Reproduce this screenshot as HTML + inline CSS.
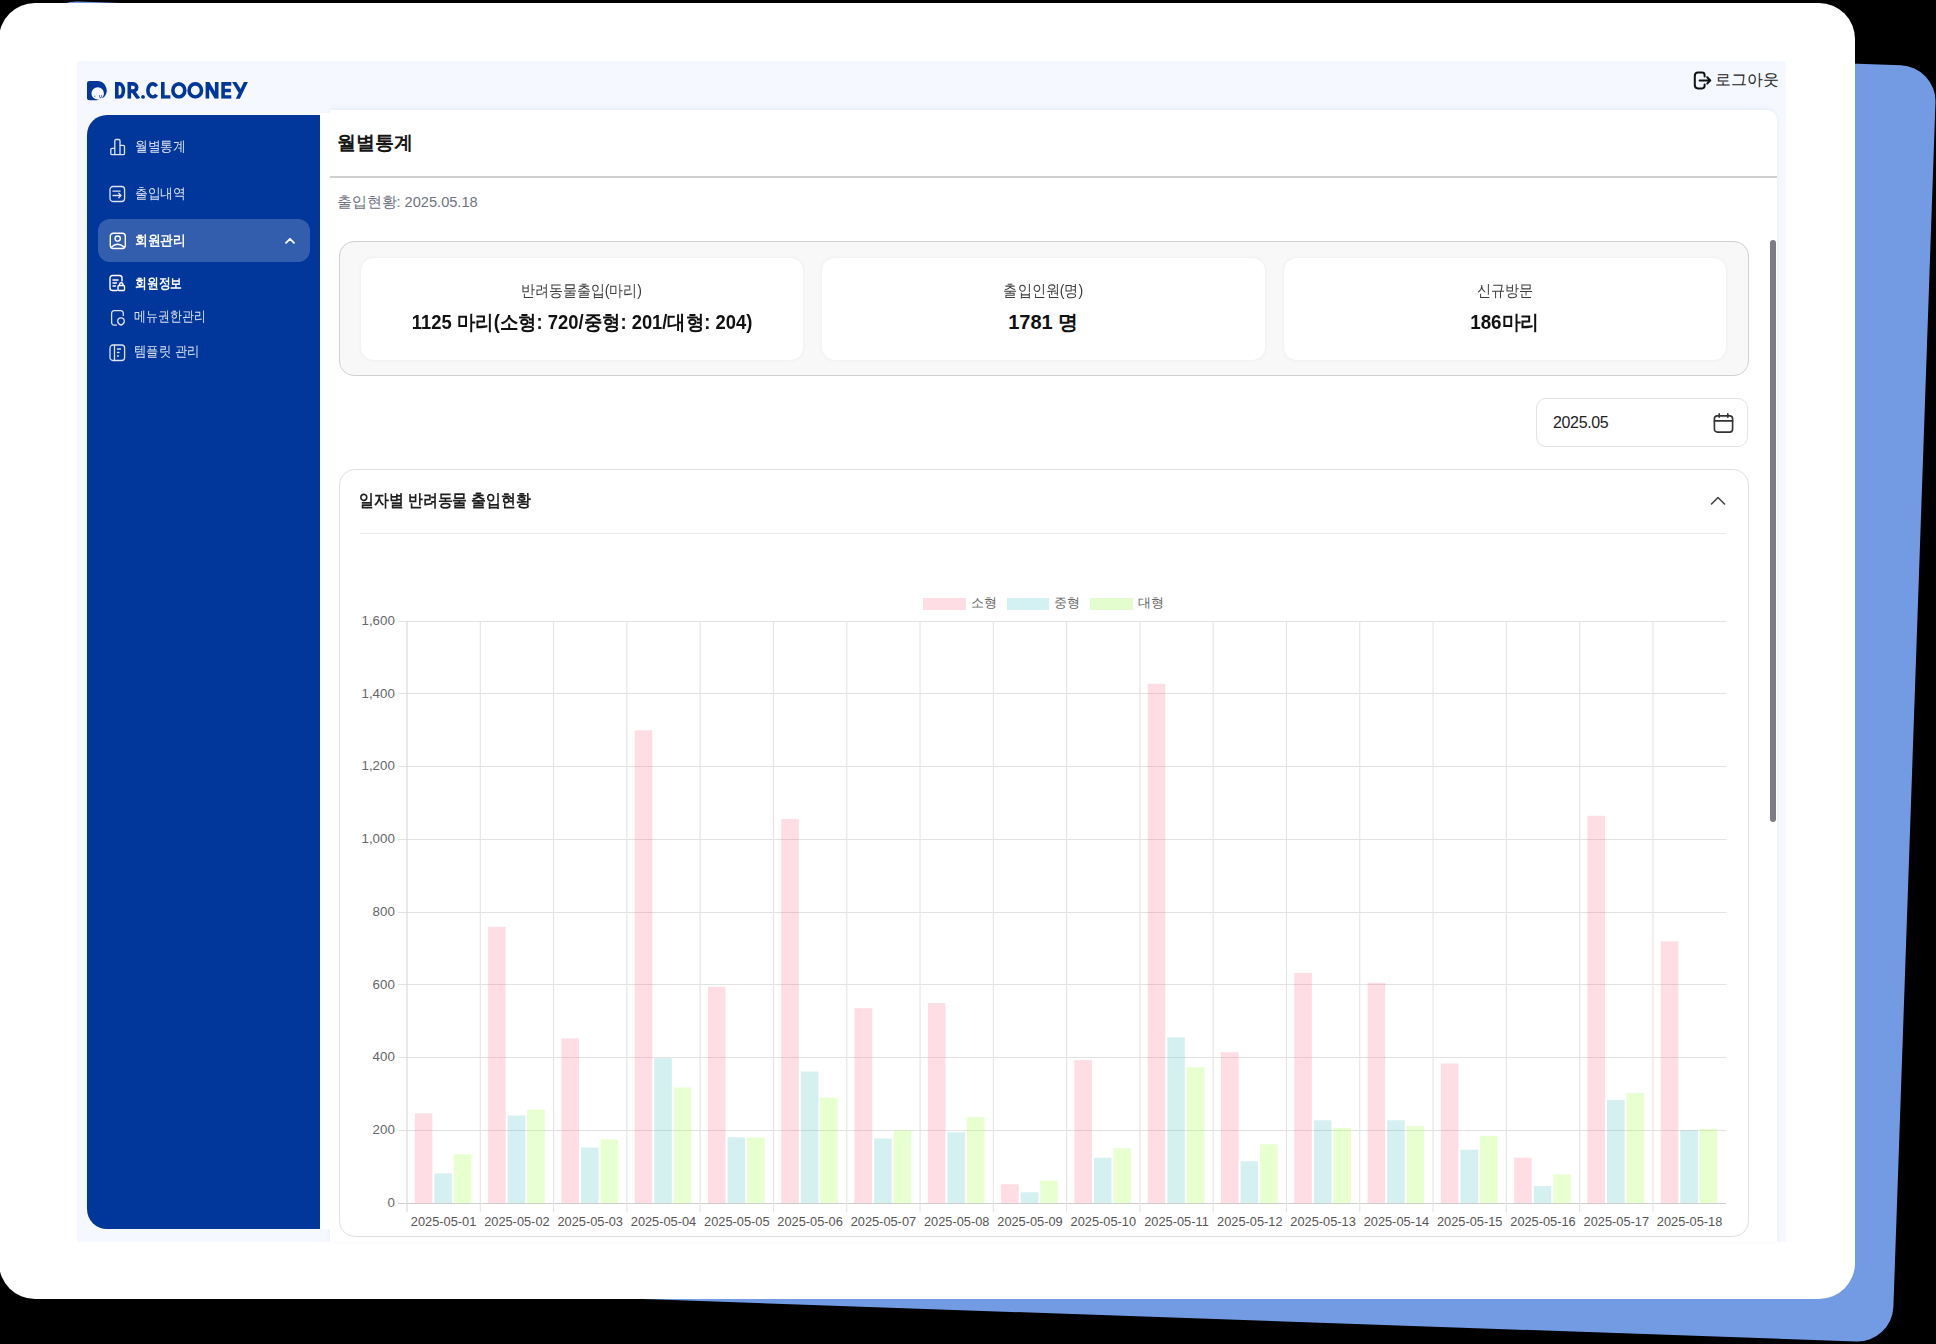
<!DOCTYPE html>
<html><head><meta charset="utf-8">
<style>
*{box-sizing:border-box;margin:0;padding:0}
html,body{width:1936px;height:1344px;overflow:hidden;background:#000;font-family:"Liberation Sans",sans-serif}
.abs{position:absolute}
.t{position:absolute;white-space:nowrap;transform-origin:0 0}
.blue{position:absolute;left:19.16px;top:32.6px;width:1895.8px;height:1277.1px;background:#729be4;border-radius:36px;transform:rotate(2deg)}
.card{position:absolute;left:-1.4px;top:3px;width:1856.4px;height:1296px;background:#fff;border-radius:36px}
.app{position:absolute;left:77px;top:61px;width:1709px;height:1181px;background:#f5f8fe}
.logo{left:112.5px;top:78px;font-weight:bold;font-size:23.5px;line-height:26px;color:#01379a;letter-spacing:-2.3px}
.logout{left:1714.5px;top:69.5px;font-size:16px;line-height:20px;color:#222}
.side{position:absolute;left:87px;top:115px;width:233.5px;height:1114px;background:#01379a;border-radius:20px 0 0 20px}
.mi{left:135.5px;font-size:14px;line-height:18px;color:#dce3f1}
.mi.act{color:#fff;font-weight:bold}
.mi.b{color:#fff;font-weight:bold}
.hl{position:absolute;left:98px;top:219px;width:212px;height:43px;border-radius:12px;background:#335eae}
.main{position:absolute;left:329.6px;top:109.5px;width:1447px;height:1132.5px;background:#fff;border-radius:0 10px 0 0;box-shadow:0 -1px 4px rgba(195,205,228,0.3)}
.gap{position:absolute;left:320px;top:113px;width:10px;height:1116px;background:#fff}
.title{left:336.5px;top:128.5px;font-size:19.4px;line-height:26px;font-weight:bold;color:#161616}
.hdiv{position:absolute;left:329.6px;top:176px;width:1447.4px;height:1.5px;background:#cfcfcf}
.sub{left:336.5px;top:193px;font-size:14.6px;line-height:18px;color:#6f7280}
.stats{position:absolute;left:338.5px;top:241px;width:1410px;height:135px;background:#f8f8f8;border:1.5px solid #d0d0d0;border-radius:15px}
.sc{position:absolute;top:257.5px;height:102px;background:#fff;border-radius:13px;box-shadow:0 0 4px rgba(0,0,0,0.06)}
.cw{position:absolute;left:0;right:0;text-align:center;white-space:nowrap}
.cw span{display:inline-block;transform-origin:50% 0}
.sl{top:23px;font-size:16px;line-height:20px;color:#3c3c3c}
.sv{top:52.5px;font-size:20px;line-height:24px;font-weight:bold;color:#111}
.date{position:absolute;left:1536px;top:398px;width:212px;height:49px;border:1px solid #e3e3e3;border-radius:10px;background:#fff}
.dtxt{left:1553px;top:413px;font-size:16px;line-height:20px;color:#222;letter-spacing:-0.35px}
.ccard{position:absolute;left:338.5px;top:469px;width:1410px;height:767.5px;border:1.3px solid #e0e0e0;border-radius:16px;background:#fff}
.ctitle{left:359px;top:489px;font-size:16.5px;line-height:22px;font-weight:bold;color:#1e1e1e}
.cdiv{position:absolute;left:360px;top:533px;width:1366px;height:1px;background:#eaeaea}
.scroll{position:absolute;left:1770px;top:239.7px;width:6px;height:582px;border-radius:3px;background:#7e7b84}
.yl{font-size:13.3px;fill:#666;font-family:"Liberation Sans",sans-serif}
.xl{font-size:12.8px;fill:#555;font-family:"Liberation Sans",sans-serif}
.lg{top:595px;font-size:12.5px;line-height:16px;color:#666}
</style></head>
<body>
<div class="blue"></div>
<div class="card"></div>
<div class="app"></div>

<!-- logo -->
<svg class="abs" style="left:87px;top:80.7px" width="20" height="20" viewBox="0 0 20 20">
  <defs><mask id="lm"><rect width="20" height="20" fill="#fff"/><circle cx="10.7" cy="12.4" r="6.2" fill="#000"/></mask></defs>
  <path d="M2.5 0 H10 A9.3 9.6 0 0 1 17 16.3 L13 17.5 L10 19.3 H2.5 A2.5 2.5 0 0 1 0 16.8 V2.5 A2.5 2.5 0 0 1 2.5 0 Z" fill="#01379a" mask="url(#lm)"/>
  <path d="M12.6 14.2 V15.6 A1 1 0 0 0 14.6 15.6 V14.2 M7.3 15.2 H8.3" stroke="#01379a" stroke-width="0.8" fill="none"/>
</svg>
<svg class="abs" style="left:110px;top:76px" width="142" height="28" viewBox="0 0 142 28" fill="none" stroke="#01379a" stroke-width="3.6"><defs><clipPath id="lc"><rect x="0" y="6.1" width="142" height="16.7"/></clipPath></defs><g clip-path="url(#lc)">
  <path d="M6.8 7.9 H9.6 A3.8 6.55 0 0 1 9.6 21 H6.8 Z"/>
  <path d="M19.3 22.8 V7.9 H23.2 A3.5 3.6 0 0 1 23.2 15.1 H19.3 M23 15.1 L28.6 22.8"/>
  <circle cx="33" cy="21" r="1.9" fill="#01379a" stroke="none"/>
  <path d="M46.6 10.2 A4.95 6.55 0 1 0 46.6 18.7"/>
  <path d="M52.8 6.1 V21 H60.4"/>
  <ellipse cx="68.85" cy="14.45" rx="5.95" ry="6.55"/>
  <ellipse cx="85.3" cy="14.45" rx="6.2" ry="6.55"/>
  <path d="M95.6 6.1 H99.4 L104.9 15.6 V6.1 H108.5 V22.8 H104.7 L99.2 13.3 V22.8 H95.6 Z" fill="#01379a" stroke="none"/>
  <path d="M121.3 7.9 H113.1 V21 H121.3 M113.1 14.45 H120.8"/>
  <path d="M123.6 5 L130 15.5 M136.4 5 L127.2 24"/>
</g></svg>

<!-- logout -->
<svg class="abs" style="left:1693px;top:71px" width="20" height="19" viewBox="0 0 20 19">
  <path d="M11.6 5.4 V4 A2.6 2.6 0 0 0 9 1.6 H5 A3.3 3.3 0 0 0 1.8 4.9 V14.1 A3.3 3.3 0 0 0 5 17.4 H9 A2.6 2.6 0 0 0 11.6 15 V13.4 M6.6 9.4 H17.3 M14.2 6.2 L17.3 9.4 L14.2 12.6" fill="none" stroke="#111" stroke-width="2" stroke-linecap="round" stroke-linejoin="round"/>
</svg>
<div class="t logout" id="logout">로그아웃</div>

<!-- sidebar -->
<div class="side"></div>
<div class="hl"></div>
<svg class="abs" style="left:108px;top:138px" width="18" height="18" viewBox="0 0 18 18" fill="none" stroke="#dce3f1" stroke-width="1.3">
  <path d="M2.8 15.5 V11.5 A1.2 1.2 0 0 1 4 10.3 H6.8 V2.7 A1.2 1.2 0 0 1 8 1.5 H10.8 A1.2 1.2 0 0 1 12 2.7 V7.3 H15.3 A1.2 1.2 0 0 1 16.5 8.5 V15.5 A1.2 1.2 0 0 1 15.3 16.7 H4 A1.2 1.2 0 0 1 2.8 15.5 Z M6.8 10.3 V16.7 M12 7.3 V16.7"/>
</svg>
<div class="t mi" style="left:134.5px;top:136.5px;transform:scaleX(0.91)">월별통계</div>
<svg class="abs" style="left:108px;top:185px" width="18" height="18" viewBox="0 0 18 18" fill="none" stroke="#dce3f1" stroke-width="1.3" stroke-linecap="round" stroke-linejoin="round">
  <rect x="2" y="1.5" width="14.6" height="15" rx="3"/><path d="M5 6.2 H12 M5 10.5 H13 M10.8 8.3 L13 10.5 L10.8 12.7"/>
</svg>
<div class="t mi" style="left:134.5px;top:183.5px;transform:scaleX(0.91)">출입내역</div>
<svg class="abs" style="left:108px;top:232px" width="18" height="18" viewBox="0 0 18 18" fill="none" stroke="#fff" stroke-width="1.4">
  <rect x="2.3" y="1.2" width="15" height="15.3" rx="3"/><circle cx="9.7" cy="6.6" r="2.6"/><path d="M3.2 15.2 Q9.7 9.3 16.3 15.2"/>
</svg>
<div class="t mi act" style="left:134.5px;top:231px;transform:scaleX(0.91)">회원관리</div>
<svg class="abs" style="left:284px;top:236px" width="12" height="9" viewBox="0 0 12 9" fill="none" stroke="#fff" stroke-width="1.8" stroke-linecap="round" stroke-linejoin="round"><path d="M2 6.8 L6 2.8 L10 6.8"/></svg>
<svg class="abs" style="left:108px;top:274px" width="18" height="18" viewBox="0 0 18 18" fill="none" stroke="#fff" stroke-width="1.4" stroke-linecap="round">
  <path d="M9 16.5 H4.5 A2.5 2.5 0 0 1 2 14 V4 A2.5 2.5 0 0 1 4.5 1.5 H11.5 A2.5 2.5 0 0 1 14 4 V7"/><path d="M5 6 H10 M5 9 H8.5 M5 12 H7.5"/><rect x="10" y="11.5" width="6.5" height="5" rx="1"/><path d="M11.5 11.5 V10.2 A1.8 1.8 0 0 1 15 10.2 V11.5"/>
</svg>
<div class="t mi b" style="left:134.5px;top:273.5px;transform:scaleX(0.84)">회원정보</div>
<svg class="abs" style="left:108px;top:310px" width="18" height="18" viewBox="0 0 18 18" fill="none" stroke="#dce3f1" stroke-width="1.3" stroke-linecap="round">
  <path d="M8.4 15.1 H6.1 A2.5 2.5 0 0 1 3.6 12.6 V3.2 A2.5 2.5 0 0 1 6.1 0.7 H12.8 A2.5 2.5 0 0 1 15.3 3.2 V5.6"/><path d="M13 15.1 C10.6 14.1 9.7 12.7 9.7 11.2 A3.3 3.3 0 0 1 16.3 11.2 C16.3 12.7 15.4 14.1 13 15.1 Z"/>
</svg>
<div class="t mi" style="left:134.2px;top:307px;transform:scaleX(0.85)">메뉴권한관리</div>
<svg class="abs" style="left:108px;top:344px" width="18" height="18" viewBox="0 0 18 18" fill="none" stroke="#dce3f1" stroke-width="1.3" stroke-linecap="round">
  <rect x="2" y="1" width="14.6" height="15.5" rx="3"/><path d="M6.5 1 V16.5 M9.5 5 H12.5 M9.5 8.5 H11 M9.5 12 H10.5"/>
</svg>
<div class="t mi" style="left:134.2px;top:341.5px;transform:scaleX(0.883)">템플릿 관리</div>

<!-- main -->
<div class="main"></div><div class="gap"></div>
<div class="t title">월별통계</div>
<div class="hdiv"></div>
<div class="t sub">출입현황: 2025.05.18</div>

<div class="stats"></div>
<div class="sc" style="left:361px;width:441.5px"><div class="cw sl"><span style="transform:scaleX(0.875)">반려동물출입(마리)</span></div><div class="cw sv"><span style="transform:scaleX(0.92)">1125 마리(소형: 720/중형: 201/대형: 204)</span></div></div>
<div class="sc" style="left:821.5px;width:443.5px"><div class="cw sl"><span style="transform:scaleX(0.88)">출입인원(명)</span></div><div class="cw sv"><span>1781 명</span></div></div>
<div class="sc" style="left:1283.5px;width:442.5px"><div class="cw sl"><span style="transform:scaleX(0.88)">신규방문</span></div><div class="cw sv"><span style="transform:scaleX(0.94)">186마리</span></div></div>

<div class="date"></div>
<div class="t dtxt">2025.05</div>
<svg class="abs" style="left:1711.5px;top:411.5px" width="23" height="22" viewBox="0 0 24 23" fill="none" stroke="#333" stroke-width="1.7" stroke-linecap="round">
  <rect x="2.5" y="4" width="19" height="17" rx="3"/><path d="M2.5 9.3 H21.5 M7.5 2 V5.5 M16.5 2 V5.5"/>
</svg>

<div class="ccard"></div>
<div class="t ctitle" style="transform:scaleX(0.877)">일자별 반려동물 출입현황</div>
<svg class="abs" style="left:1709px;top:493px" width="18" height="16" viewBox="0 0 18 16" fill="none" stroke="#444" stroke-width="1.6" stroke-linecap="round" stroke-linejoin="round"><path d="M2.5 11 L9 4.5 L15.5 11"/></svg>
<div class="cdiv"></div>

<!-- legend -->
<div class="abs" style="left:923px;top:597.5px;width:42.5px;height:12px;background:#ffdde4"></div>
<div class="t lg" style="left:970.5px">소형</div>
<div class="abs" style="left:1006.5px;top:597.5px;width:42.5px;height:12px;background:#d3f1f2"></div>
<div class="t lg" style="left:1053.5px">중형</div>
<div class="abs" style="left:1090px;top:597.5px;width:42.5px;height:12px;background:#e3fdcf"></div>
<div class="t lg" style="left:1137.5px">대형</div>

<svg class="abs" style="left:0;top:0" width="1936" height="1344">
<line x1="398" y1="621.5" x2="1726.2" y2="621.5" stroke="#e2e2e2" stroke-width="1"/>
<text x="394.8" y="624.8" text-anchor="end" class="yl">1,600</text>
<line x1="398" y1="693.5" x2="1726.2" y2="693.5" stroke="#e2e2e2" stroke-width="1"/>
<text x="394.8" y="697.6" text-anchor="end" class="yl">1,400</text>
<line x1="398" y1="766.5" x2="1726.2" y2="766.5" stroke="#e2e2e2" stroke-width="1"/>
<text x="394.8" y="770.3" text-anchor="end" class="yl">1,200</text>
<line x1="398" y1="839.5" x2="1726.2" y2="839.5" stroke="#e2e2e2" stroke-width="1"/>
<text x="394.8" y="843.1" text-anchor="end" class="yl">1,000</text>
<line x1="398" y1="912.5" x2="1726.2" y2="912.5" stroke="#e2e2e2" stroke-width="1"/>
<text x="394.8" y="915.8" text-anchor="end" class="yl">800</text>
<line x1="398" y1="984.5" x2="1726.2" y2="984.5" stroke="#e2e2e2" stroke-width="1"/>
<text x="394.8" y="988.6" text-anchor="end" class="yl">600</text>
<line x1="398" y1="1057.5" x2="1726.2" y2="1057.5" stroke="#e2e2e2" stroke-width="1"/>
<text x="394.8" y="1061.3" text-anchor="end" class="yl">400</text>
<line x1="398" y1="1130.5" x2="1726.2" y2="1130.5" stroke="#e2e2e2" stroke-width="1"/>
<text x="394.8" y="1134.0" text-anchor="end" class="yl">200</text>
<line x1="398" y1="1203.5" x2="1726.2" y2="1203.5" stroke="#cfcfcf" stroke-width="1"/>
<text x="394.8" y="1206.8" text-anchor="end" class="yl">0</text>
<line x1="407.00" y1="621.2" x2="407.00" y2="1212.2" stroke="#d6d6d6" stroke-width="1.1"/>
<line x1="480.29" y1="621.2" x2="480.29" y2="1212.2" stroke="#e4e4e4" stroke-width="1.1"/>
<line x1="553.58" y1="621.2" x2="553.58" y2="1212.2" stroke="#e4e4e4" stroke-width="1.1"/>
<line x1="626.87" y1="621.2" x2="626.87" y2="1212.2" stroke="#e4e4e4" stroke-width="1.1"/>
<line x1="700.16" y1="621.2" x2="700.16" y2="1212.2" stroke="#e4e4e4" stroke-width="1.1"/>
<line x1="773.45" y1="621.2" x2="773.45" y2="1212.2" stroke="#e4e4e4" stroke-width="1.1"/>
<line x1="846.74" y1="621.2" x2="846.74" y2="1212.2" stroke="#e4e4e4" stroke-width="1.1"/>
<line x1="920.03" y1="621.2" x2="920.03" y2="1212.2" stroke="#e4e4e4" stroke-width="1.1"/>
<line x1="993.32" y1="621.2" x2="993.32" y2="1212.2" stroke="#e4e4e4" stroke-width="1.1"/>
<line x1="1066.61" y1="621.2" x2="1066.61" y2="1212.2" stroke="#e4e4e4" stroke-width="1.1"/>
<line x1="1139.90" y1="621.2" x2="1139.90" y2="1212.2" stroke="#e4e4e4" stroke-width="1.1"/>
<line x1="1213.19" y1="621.2" x2="1213.19" y2="1212.2" stroke="#e4e4e4" stroke-width="1.1"/>
<line x1="1286.48" y1="621.2" x2="1286.48" y2="1212.2" stroke="#e4e4e4" stroke-width="1.1"/>
<line x1="1359.77" y1="621.2" x2="1359.77" y2="1212.2" stroke="#e4e4e4" stroke-width="1.1"/>
<line x1="1433.06" y1="621.2" x2="1433.06" y2="1212.2" stroke="#e4e4e4" stroke-width="1.1"/>
<line x1="1506.35" y1="621.2" x2="1506.35" y2="1212.2" stroke="#e4e4e4" stroke-width="1.1"/>
<line x1="1579.64" y1="621.2" x2="1579.64" y2="1212.2" stroke="#e4e4e4" stroke-width="1.1"/>
<line x1="1652.93" y1="621.2" x2="1652.93" y2="1212.2" stroke="#e4e4e4" stroke-width="1.1"/>
<rect x="414.81" y="1113.4" width="17.59" height="89.8" fill="rgba(255,99,132,0.22)"/>
<rect x="434.35" y="1173.4" width="17.59" height="29.8" fill="rgba(75,192,192,0.23)"/>
<rect x="453.89" y="1154.1" width="17.59" height="49.1" fill="rgba(160,255,60,0.24)"/>
<text x="443.6" y="1226" text-anchor="middle" class="xl">2025-05-01</text>
<rect x="488.10" y="926.8" width="17.59" height="276.4" fill="rgba(255,99,132,0.22)"/>
<rect x="507.64" y="1115.5" width="17.59" height="87.7" fill="rgba(75,192,192,0.23)"/>
<rect x="527.18" y="1109.7" width="17.59" height="93.5" fill="rgba(160,255,60,0.24)"/>
<text x="516.9" y="1226" text-anchor="middle" class="xl">2025-05-02</text>
<rect x="561.39" y="1038.4" width="17.59" height="164.8" fill="rgba(255,99,132,0.22)"/>
<rect x="580.93" y="1147.5" width="17.59" height="55.7" fill="rgba(75,192,192,0.23)"/>
<rect x="600.47" y="1139.5" width="17.59" height="63.7" fill="rgba(160,255,60,0.24)"/>
<text x="590.2" y="1226" text-anchor="middle" class="xl">2025-05-03</text>
<rect x="634.68" y="730.3" width="17.59" height="472.9" fill="rgba(255,99,132,0.22)"/>
<rect x="654.22" y="1058.1" width="17.59" height="145.1" fill="rgba(75,192,192,0.23)"/>
<rect x="673.76" y="1087.5" width="17.59" height="115.7" fill="rgba(160,255,60,0.24)"/>
<text x="663.5" y="1226" text-anchor="middle" class="xl">2025-05-04</text>
<rect x="707.97" y="986.8" width="17.59" height="216.4" fill="rgba(255,99,132,0.22)"/>
<rect x="727.51" y="1137.4" width="17.59" height="65.8" fill="rgba(75,192,192,0.23)"/>
<rect x="747.05" y="1137.4" width="17.59" height="65.8" fill="rgba(160,255,60,0.24)"/>
<text x="736.8" y="1226" text-anchor="middle" class="xl">2025-05-05</text>
<rect x="781.26" y="819.1" width="17.59" height="384.1" fill="rgba(255,99,132,0.22)"/>
<rect x="800.80" y="1071.5" width="17.59" height="131.7" fill="rgba(75,192,192,0.23)"/>
<rect x="820.34" y="1097.7" width="17.59" height="105.5" fill="rgba(160,255,60,0.24)"/>
<text x="810.1" y="1226" text-anchor="middle" class="xl">2025-05-06</text>
<rect x="854.55" y="1008.2" width="17.59" height="195.0" fill="rgba(255,99,132,0.22)"/>
<rect x="874.09" y="1138.5" width="17.59" height="64.7" fill="rgba(75,192,192,0.23)"/>
<rect x="893.63" y="1130.5" width="17.59" height="72.8" fill="rgba(160,255,60,0.24)"/>
<text x="883.4" y="1226" text-anchor="middle" class="xl">2025-05-07</text>
<rect x="927.84" y="1003.1" width="17.59" height="200.1" fill="rgba(255,99,132,0.22)"/>
<rect x="947.38" y="1132.3" width="17.59" height="70.9" fill="rgba(75,192,192,0.23)"/>
<rect x="966.92" y="1117.0" width="17.59" height="86.2" fill="rgba(160,255,60,0.24)"/>
<text x="956.7" y="1226" text-anchor="middle" class="xl">2025-05-08</text>
<rect x="1001.13" y="1184.3" width="17.59" height="18.9" fill="rgba(255,99,132,0.22)"/>
<rect x="1020.67" y="1192.3" width="17.59" height="10.9" fill="rgba(75,192,192,0.23)"/>
<rect x="1040.21" y="1180.6" width="17.59" height="22.6" fill="rgba(160,255,60,0.24)"/>
<text x="1030.0" y="1226" text-anchor="middle" class="xl">2025-05-09</text>
<rect x="1074.42" y="1060.2" width="17.59" height="143.0" fill="rgba(255,99,132,0.22)"/>
<rect x="1093.96" y="1157.7" width="17.59" height="45.5" fill="rgba(75,192,192,0.23)"/>
<rect x="1113.50" y="1148.3" width="17.59" height="54.9" fill="rgba(160,255,60,0.24)"/>
<text x="1103.3" y="1226" text-anchor="middle" class="xl">2025-05-10</text>
<rect x="1147.71" y="683.8" width="17.59" height="519.4" fill="rgba(255,99,132,0.22)"/>
<rect x="1167.25" y="1037.3" width="17.59" height="165.9" fill="rgba(75,192,192,0.23)"/>
<rect x="1186.79" y="1067.2" width="17.59" height="136.0" fill="rgba(160,255,60,0.24)"/>
<text x="1176.5" y="1226" text-anchor="middle" class="xl">2025-05-11</text>
<rect x="1221.00" y="1052.2" width="17.59" height="151.0" fill="rgba(255,99,132,0.22)"/>
<rect x="1240.54" y="1161.4" width="17.59" height="41.8" fill="rgba(75,192,192,0.23)"/>
<rect x="1260.08" y="1144.3" width="17.59" height="58.9" fill="rgba(160,255,60,0.24)"/>
<text x="1249.8" y="1226" text-anchor="middle" class="xl">2025-05-12</text>
<rect x="1294.29" y="972.9" width="17.59" height="230.3" fill="rgba(255,99,132,0.22)"/>
<rect x="1313.83" y="1120.3" width="17.59" height="82.9" fill="rgba(75,192,192,0.23)"/>
<rect x="1333.37" y="1127.9" width="17.59" height="75.3" fill="rgba(160,255,60,0.24)"/>
<text x="1323.1" y="1226" text-anchor="middle" class="xl">2025-05-13</text>
<rect x="1367.58" y="982.8" width="17.59" height="220.4" fill="rgba(255,99,132,0.22)"/>
<rect x="1387.12" y="1120.3" width="17.59" height="82.9" fill="rgba(75,192,192,0.23)"/>
<rect x="1406.66" y="1126.1" width="17.59" height="77.1" fill="rgba(160,255,60,0.24)"/>
<text x="1396.4" y="1226" text-anchor="middle" class="xl">2025-05-14</text>
<rect x="1440.87" y="1063.5" width="17.59" height="139.7" fill="rgba(255,99,132,0.22)"/>
<rect x="1460.41" y="1149.7" width="17.59" height="53.5" fill="rgba(75,192,192,0.23)"/>
<rect x="1479.95" y="1135.9" width="17.59" height="67.3" fill="rgba(160,255,60,0.24)"/>
<text x="1469.7" y="1226" text-anchor="middle" class="xl">2025-05-15</text>
<rect x="1514.16" y="1157.7" width="17.59" height="45.5" fill="rgba(255,99,132,0.22)"/>
<rect x="1533.70" y="1186.1" width="17.59" height="17.1" fill="rgba(75,192,192,0.23)"/>
<rect x="1553.24" y="1174.5" width="17.59" height="28.7" fill="rgba(160,255,60,0.24)"/>
<text x="1543.0" y="1226" text-anchor="middle" class="xl">2025-05-16</text>
<rect x="1587.45" y="815.8" width="17.59" height="387.4" fill="rgba(255,99,132,0.22)"/>
<rect x="1606.99" y="1099.9" width="17.59" height="103.3" fill="rgba(75,192,192,0.23)"/>
<rect x="1626.53" y="1093.0" width="17.59" height="110.2" fill="rgba(160,255,60,0.24)"/>
<text x="1616.3" y="1226" text-anchor="middle" class="xl">2025-05-17</text>
<rect x="1660.74" y="941.3" width="17.59" height="261.9" fill="rgba(255,99,132,0.22)"/>
<rect x="1680.28" y="1130.1" width="17.59" height="73.1" fill="rgba(75,192,192,0.23)"/>
<rect x="1699.82" y="1129.0" width="17.59" height="74.2" fill="rgba(160,255,60,0.24)"/>
<text x="1689.6" y="1226" text-anchor="middle" class="xl">2025-05-18</text>
</svg>

<div class="scroll"></div>
</body></html>
